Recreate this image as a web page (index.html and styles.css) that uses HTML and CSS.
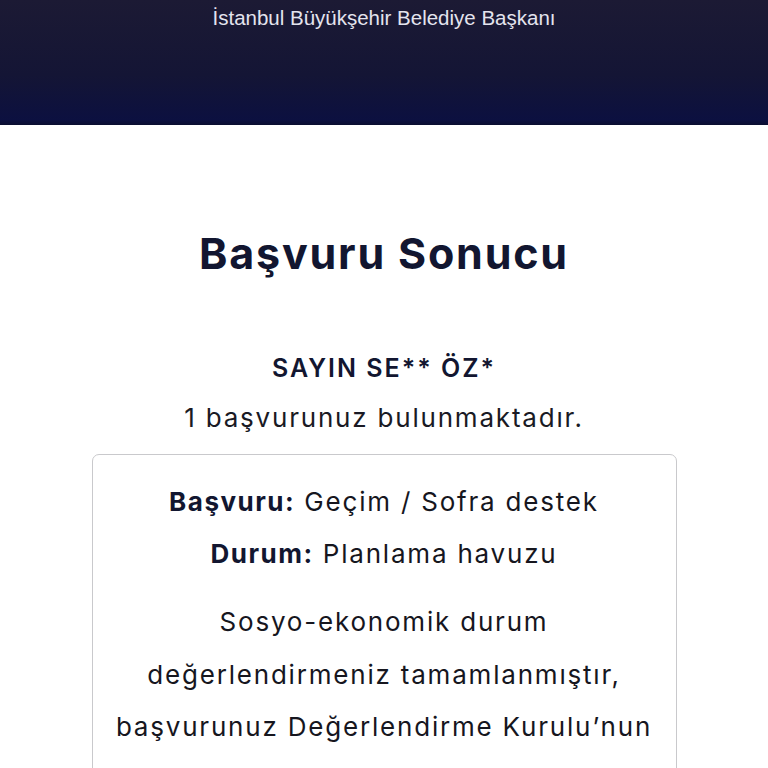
FILE: index.html
```html
<!DOCTYPE html>
<html lang="tr">
<head>
<meta charset="utf-8">
<title>Başvuru Sonucu</title>
<link rel="stylesheet" href="styles.css">
</head>
<body>
<header class="hero">
  <p class="hero-sub">İstanbul Büyükşehir Belediye Başkanı</p>
</header>
<main class="result">
  <h1 class="result-title">Başvuru Sonucu</h1>
  <p class="result-name">SAYIN SE** ÖZ*</p>
  <p class="result-count">1 başvurunuz bulunmaktadır.</p>
  <section class="card">
    <p class="card-row"><strong>Başvuru:</strong> Geçim / Sofra destek</p>
    <p class="card-row"><strong>Durum:</strong> Planlama havuzu</p>
    <p class="card-text">Sosyo-ekonomik durum değerlendirmeniz tamamlanmıştır, başvurunuz Değerlendirme Kurulu’nun onayına sunulacaktır.</p>
  </section>
</main>
</body>
</html>
```
FILE: styles.css
```css
html, body {
  margin: 0;
  padding: 0;
  background: #ffffff;
}
body {
  font-family: Inter, "Open Sans", sans-serif;
  color: #151830;
}
.hero {
  height: 125px;
  background: linear-gradient(180deg, #1c1a34 0%, #141535 60%, #0c1040 96%, #0a0d30 100%);
  display: flex;
  justify-content: center;
  align-items: flex-start;
}
.hero-sub {
  margin: 6px 0 0;
  font-family: "Liberation Sans", Arial, sans-serif;
  font-size: 20.5px;
  line-height: 24px;
  color: #e4e4ee;
}
.result {
  display: flex;
  flex-direction: column;
  align-items: center;
  padding-top: 103px;
}
.result-title {
  margin: 0;
  font-size: 43px;
  line-height: 50px;
  font-weight: 700;
  letter-spacing: 1.8px;
  color: #121630;
}
.result-name {
  margin: 75px 0 0;
  font-size: 25px;
  line-height: 30px;
  font-weight: 600;
  letter-spacing: 2px;
  color: #121630;
}
.result-count {
  margin: 20px 0 0;
  font-size: 26px;
  line-height: 30px;
  font-weight: 400;
  letter-spacing: 1.8px;
  color: #1a1a24;
}
.card {
  box-sizing: border-box;
  width: 585px;
  margin-top: 21px;
  border: 1px solid #c9c9cc;
  border-radius: 7px;
  padding: 21px 20px 0;
  text-align: center;
  color: #16161e;
}
.card-row {
  margin: 0;
  font-size: 26px;
  line-height: 52px;
  letter-spacing: 1.8px;
}
.card-row strong {
  font-weight: 700;
  letter-spacing: 1.5px;
  color: #121630;
}
.card-text {
  margin: 16px 0 0;
  font-size: 26px;
  line-height: 52.5px;
  letter-spacing: 1.8px;
}
```
